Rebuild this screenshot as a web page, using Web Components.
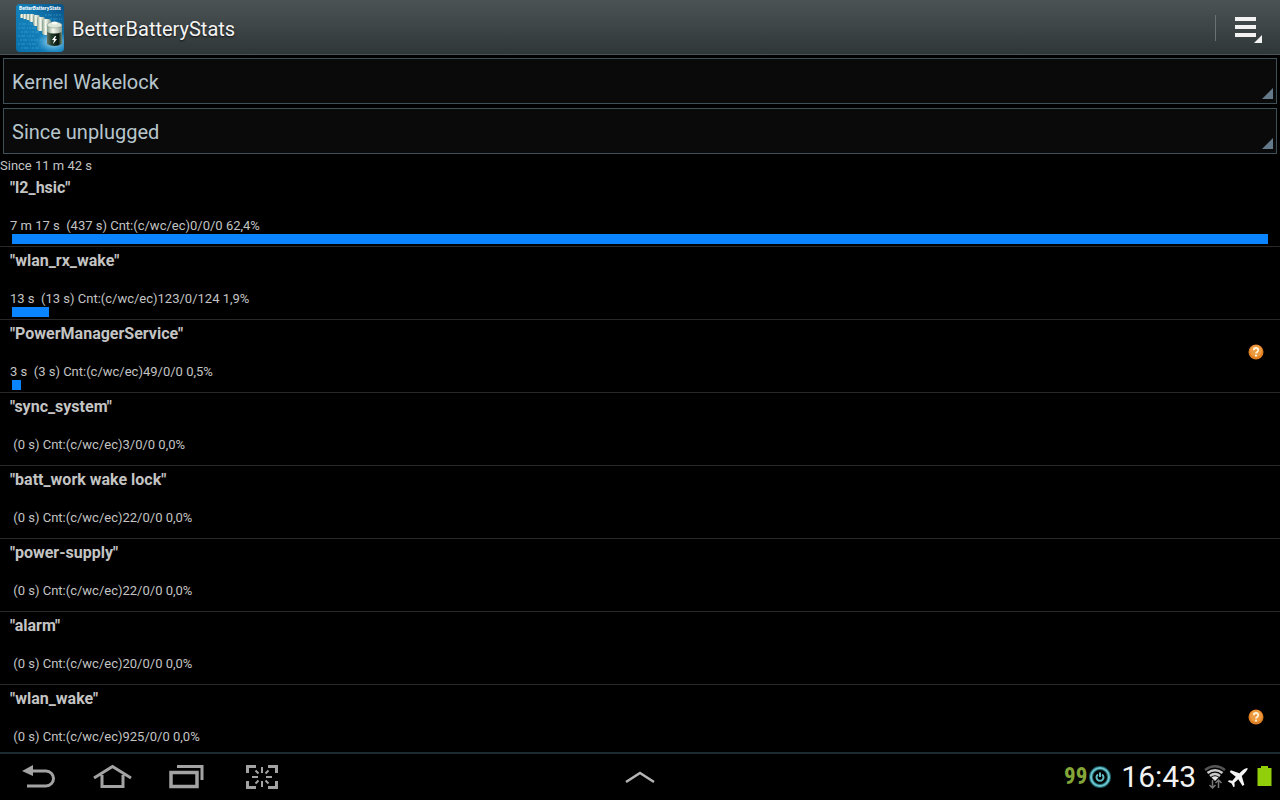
<!DOCTYPE html>
<html lang="en">
<head>
<meta charset="utf-8">
<meta name="viewport" content="width=device-width, initial-scale=1">
<title>BetterBatteryStats</title>
<style>
html, body {height: 100%;}
body {margin: 0; background: #000; color: #c4c4c4; font-family: Roboto, "Noto Sans", sans-serif;}
</style>
</head>
<body>
<battery-app>
  <action-bar slot="header">BetterBatteryStats</action-bar>

  <drop-down slot="filters" label="Statistic" options="Kernel Wakelock|Partial Wakelock|Alarms|Process"></drop-down>
  <drop-down slot="filters" label="Reference" options="Since unplugged|Since charged|Since boot"></drop-down>

  <span slot="since">Since 11 m 42 s</span>

  <stat-row value="437">"l2_hsic"<span slot="detail">7 m 17 s  (437 s) Cnt:(c/wc/ec)0/0/0 62,4%</span></stat-row>
  <stat-row value="13">"wlan_rx_wake"<span slot="detail">13 s  (13 s) Cnt:(c/wc/ec)123/0/124 1,9%</span></stat-row>
  <stat-row value="3" help>"PowerManagerService"<span slot="detail">3 s  (3 s) Cnt:(c/wc/ec)49/0/0 0,5%</span></stat-row>
  <stat-row>"sync_system"<span slot="detail"> (0 s) Cnt:(c/wc/ec)3/0/0 0,0%</span></stat-row>
  <stat-row>"batt_work wake lock"<span slot="detail"> (0 s) Cnt:(c/wc/ec)22/0/0 0,0%</span></stat-row>
  <stat-row>"power-supply"<span slot="detail"> (0 s) Cnt:(c/wc/ec)22/0/0 0,0%</span></stat-row>
  <stat-row>"alarm"<span slot="detail"> (0 s) Cnt:(c/wc/ec)20/0/0 0,0%</span></stat-row>
  <stat-row help>"wlan_wake"<span slot="detail"> (0 s) Cnt:(c/wc/ec)925/0/0 0,0%</span></stat-row>

  <system-bar slot="footer" battery="99">16:43</system-bar>
</battery-app>

<script>
// The longest wakelock fills the whole bar.
const MAX_SECONDS = 437;

// Page frame: header, filters, scrolling list, footer.
class BatteryApp extends HTMLElement {
  connectedCallback() {
    this.attachShadow({mode: "open"}).innerHTML = `
      <style>
      :host {display: flex; flex-direction: column; height: 100vh;}
      .filters {display: flex; flex-direction: column; gap: 4px; padding: 3px;}
      .since {font-size: 13px; line-height: 17px;}
      main {flex: 1; min-height: 0; overflow-y: auto; scrollbar-width: none;}
      </style>
      <slot name="header"></slot>
      <div class="filters"><slot name="filters"></slot></div>
      <div class="since"><slot name="since"></slot></div>
      <main><slot></slot></main>
      <slot name="footer"></slot>
    `;
  }
}

class ActionBar extends HTMLElement {
  connectedCallback() {
    this.attachShadow({mode: "open"}).innerHTML = `
      <style>
      :host {display: block;}
      header {
        display: flex; align-items: center; box-sizing: border-box; height: 55px; padding: 2px 16px 0;
        background: linear-gradient(#4b5355, #40484a 40%, #2f3638);
        border-bottom: 1px solid #4a5557;
      }
      h1 {
        flex: 1; margin: 0; padding: 1px 8px 0; color: #f4f4f4;
        font-size: 20px; font-weight: 400; line-height: 24px; text-shadow: 0 1px 2px #111;
      }
      svg {display: block;}
      button {
        border: 0; border-left: 1px solid #687174; margin: 0; padding: 0 0 0 18px;
        background: none; height: 26px;
      }
      </style>
      <header>
        <svg width="48" height="48" viewBox="0 0 48 48" aria-hidden="true">
          <defs>
            <linearGradient id="sky" x1="1" y1="0" x2="0" y2="1">
              <stop offset="0" stop-color="#075084"/>
              <stop offset=".5" stop-color="#1581bb"/>
              <stop offset="1" stop-color="#0870aa"/>
            </linearGradient>
            <linearGradient id="can">
              <stop offset="0" stop-color="#667064"/>
              <stop offset=".3" stop-color="#24402d"/>
              <stop offset=".75" stop-color="#07140c"/>
              <stop offset="1" stop-color="#759078"/>
            </linearGradient>
            <linearGradient id="steel">
              <stop offset="0" stop-color="#7f9b8b"/>
              <stop offset=".4" stop-color="#f7faee"/>
              <stop offset="1" stop-color="#8c9e90"/>
            </linearGradient>
            <radialGradient id="glow">
              <stop offset="0" stop-color="#d6f2ff" stop-opacity=".9"/>
              <stop offset="1" stop-color="#6bc5ee" stop-opacity="0"/>
            </radialGradient>
          </defs>
          <rect width="48" height="48" rx="4" fill="url(#sky)"/>
          <path d="M3 20h13M2 24h18M5 28h20M2 32h16M4 36h23M2 40h18M5 44h22M29 11h16M34 15h12" stroke="#52bdec" stroke-dasharray="2 1 4 2 1 1" opacity=".45"/>
          <ellipse cx="37" cy="38" rx="17" ry="11" fill="url(#glow)"/>
          <g fill="url(#steel)">
            <rect x="4" y="10" width="4" height="4" rx="1"/>
            <rect x="7" y="10" width="4" height="5" rx="1"/>
            <rect x="10" y="10" width="5" height="6" rx="1"/>
            <rect x="13" y="10" width="6" height="8" rx="2"/>
            <rect x="17" y="11" width="7" height="11" rx="2"/>
            <rect x="21" y="13" width="8" height="14" rx="2"/>
            <rect x="26" y="15" width="9" height="16" rx="3"/>
          </g>
          <path d="M31 21v19q7 4 15 0V21z" fill="url(#can)"/>
          <path d="M31 21v7q7 3 15 0v-7z" fill="url(#steel)"/>
          <ellipse cx="38.500" cy="21" rx="7.500" ry="3" fill="#dce6d9" stroke="#7e9082" stroke-width=".5"/>
          <ellipse cx="38.500" cy="19" rx="3" ry="1.500" fill="#f9fbf5"/>
          <path d="M39 32l-3 4h2l-1 4 4-5h-2l1-3z" fill="#fff"/>
          <text x="24" y="6" text-anchor="middle" font-size="5" font-weight="700" fill="#fff">BetterBatteryStats</text>
        </svg>
        <h1><slot></slot></h1>
        <button type="button" aria-label="Menu">
          <svg width="30" height="28" viewBox="0 0 30 28">
            <path d="M1 2h21v4H1zM1 10h21v4H1zM1 18h21v4H1zM28 20v8h-8z" fill="#f2f2f2"/>
          </svg>
        </button>
      </header>
    `;
  }
}

class DropDown extends HTMLElement {
  connectedCallback() {
    const shadowRoot = this.attachShadow({mode: "open"});
    shadowRoot.innerHTML = `
      <style>
      :host {display: block;}
      label {display: block; position: relative;}
      select {
        appearance: none; display: block; box-sizing: border-box; width: 100%; height: 46px;
        margin: 0; padding: 2px 24px 0 8px; border: 1px solid #405058; border-radius: 0;
        background: #0a0a0a; color: #b7c5cc; font: 20px Roboto, sans-serif;
      }
      svg {position: absolute; right: 4px; bottom: 5px; pointer-events: none;}
      </style>
      <label>
        <select></select>
        <svg width="11" height="11" viewBox="0 0 11 11"><path d="M11 0v11H0z" fill="#647a8b"/></svg>
      </label>
    `;

    const select = shadowRoot.querySelector("select");
    select.setAttribute("aria-label", this.getAttribute("label"));
    for (const text of this.getAttribute("options").split("|")) {
      select.add(new Option(text));
    }
  }
}

// One wakelock: name, detail line and usage bar.
class StatRow extends HTMLElement {
  connectedCallback() {
    const shadowRoot = this.attachShadow({mode: "open"});
    shadowRoot.innerHTML = `
      <style>
      :host {display: block; padding: 4px 12px 2px 10px; border-bottom: 1px solid #292929;}
      .row {display: flex; align-items: center;}
      .text {flex: 1;}
      h2 {margin: 0 0 20px; font-size: 16px; font-weight: 700; line-height: 20px;}
      p {margin: 0; font-size: 13px; line-height: 16px; white-space: pre;}
      .track {height: 10px; margin-left: 2px;}
      .fill {height: 100%; background: #0a84ff;}
      button {margin: 0 4px 0 0; padding: 0; border: 0; background: none;}
      svg {display: block;}
      </style>
      <div class="row">
        <div class="text">
          <h2><slot></slot></h2>
          <p><slot name="detail"></slot></p>
        </div>
      </div>
      <div class="track"><div class="fill"></div></div>
    `;

    const share = Number(this.getAttribute("value")) / MAX_SECONDS;
    shadowRoot.querySelector(".fill").style.width = `${share * 100}%`;

    if (this.hasAttribute("help")) {
      const button = document.createElement("button");
      button.type = "button";
      button.setAttribute("aria-label", "Help");
      button.innerHTML = `
        <svg width="16" height="16" viewBox="0 0 16 16">
          <circle cx="8" cy="8" r="7.5" fill="#e07f20"/>
          <circle cx="8" cy="7" r="6" fill="#ec9a40"/>
          <path d="M5.8 6.2q0-2.2 2.2-2.2t2.2 2q0 1.2-1.1 1.9T8 9.5" fill="none" stroke="#fff3d8" stroke-width="1.8"/>
          <circle cx="8" cy="11.7" r="1.1" fill="#fff3d8"/>
        </svg>
      `;
      shadowRoot.querySelector(".row").appendChild(button);
    }
  }
}

class SystemBar extends HTMLElement {
  connectedCallback() {
    const shadowRoot = this.attachShadow({mode: "open"});
    shadowRoot.innerHTML = `
      <style>
      :host {display: block;}
      footer {
        display: grid; grid-template-columns: 1fr auto 1fr; align-items: center;
        height: 46px; padding: 0 8px; border-top: 2px solid #1c2a31; background: #000;
      }
      nav {display: flex; gap: 35px; padding-left: 12px;}
      button {margin: 0; padding: 0; border: 0; background: none;}
      svg {display: block;}
      .status {display: flex; justify-content: flex-end; align-items: center;}
      .level {color: #84a638; font: 700 23px/28px "Liberation Sans Narrow", "Roboto Condensed", sans-serif;}
      time {margin: 0 8px; color: #f2f2f2; font-size: 30px; line-height: 36px;}
      .battery {margin-left: 5px;}
      </style>
      <footer>
        <nav>
          <button type="button" aria-label="Back">
            <svg width="38" height="32" viewBox="0 0 38 32" fill="none" stroke="#a3a3a3" stroke-width="3">
              <path d="M11 10h15a7.5 7.5 0 0 1 0 15H7"/>
              <path d="M2 10l11-6v11z" fill="#a3a3a3" stroke="none"/>
            </svg>
          </button>
          <button type="button" aria-label="Home">
            <svg width="40" height="32" viewBox="0 0 40 32" fill="none" stroke="#a3a3a3" stroke-width="3">
              <path d="M1 17L19.500 5.500 38 17M9 14v11.500h21V14"/>
            </svg>
          </button>
          <button type="button" aria-label="Recent apps">
            <svg width="40" height="32" viewBox="0 0 40 32" fill="none" stroke="#a3a3a3">
              <path d="M3 11.500h26v14H3z" stroke-width="3.500"/>
              <path d="M9 5.500h25V19" stroke-width="3"/>
            </svg>
          </button>
          <button type="button" aria-label="Screenshot">
            <svg width="38" height="32" viewBox="0 0 38 32" fill="none" stroke="#a3a3a3">
              <path d="M4.500 12V5.500H13M25 5.500h8.500V12M33.500 20v6.500H25M13 26.500H4.500V20" stroke-width="3"/>
              <path d="M19 6v6M19 20v6M9 16h6M23 16h6M12.500 9.500l3 3M25.500 9.500l-3 3M12.500 22.500l3-3M25.500 22.500l-3-3" stroke-width="2"/>
            </svg>
          </button>
        </nav>
        <button type="button" aria-label="Show mini apps">
          <svg width="30" height="14" viewBox="0 0 30 14"><path d="M1 12L15 3l14 9" fill="none" stroke="#b5b5b5" stroke-width="2.500"/></svg>
        </button>
        <div class="status">
          <span class="level"></span>
          <svg width="26" height="26" viewBox="0 0 26 26" fill="none">
            <circle cx="13" cy="13" r="9" stroke="#1b626b" stroke-width="4"/>
            <circle cx="13" cy="13" r="9" stroke="#6fc4cb" stroke-width="2"/>
            <path d="M11 10.500a3.500 3.500 0 1 0 4 0M13 8.500V13" stroke="#62bcc4" stroke-width="2"/>
          </svg>
          <time><slot></slot></time>
          <svg width="22" height="28" viewBox="0 0 22 28" fill="none">
            <path d="M1 7q10-7.500 20 0" stroke="#555" stroke-width="2.500"/>
            <path d="M3.500 10q7.500-5.500 15 0M6 13q5-4 10 0" stroke="#c9c9c9" stroke-width="2.500"/>
            <path d="M11 18l-3.500-3.500q3.500-2.500 7 0z" fill="#e4e4e4"/>
            <path d="M8.500 17v8M5.500 22l3 3 3-3M14.500 25v-8M11.500 20l3-3 3 3" stroke="#777" stroke-width="1.500"/>
          </svg>
          <svg width="26" height="24" viewBox="0 0 28 26">
            <path d="M22 3.500q1.800-.8 1.200 1.200-.8 2-3.700 4.800L17 12l2.800 9.500-1.900 1.200-4.700-7.200-4.200 3.700.4 3.800-1.400 1-2-4-4-2 1-1.400 3.800.4 3.700-4.200L4 7.500l1.200-1.900L14.500 9l2.800-2.800q2.600-2.200 4.700-2.700z" fill="#f5f5f5"/>
          </svg>
          <svg class="battery" width="15" height="24" viewBox="0 0 15 24">
            <path d="M4 1h7v2h3.500v18H.5V3H4z" fill="#92cf0b"/>
          </svg>
        </div>
      </footer>
    `;
    shadowRoot.querySelector(".level").textContent = this.getAttribute("battery");
  }
}

// Register the custom elements:
customElements.define("battery-app", BatteryApp);
customElements.define("action-bar", ActionBar);
customElements.define("drop-down", DropDown);
customElements.define("stat-row", StatRow);
customElements.define("system-bar", SystemBar);
</script>
</body>
</html>
